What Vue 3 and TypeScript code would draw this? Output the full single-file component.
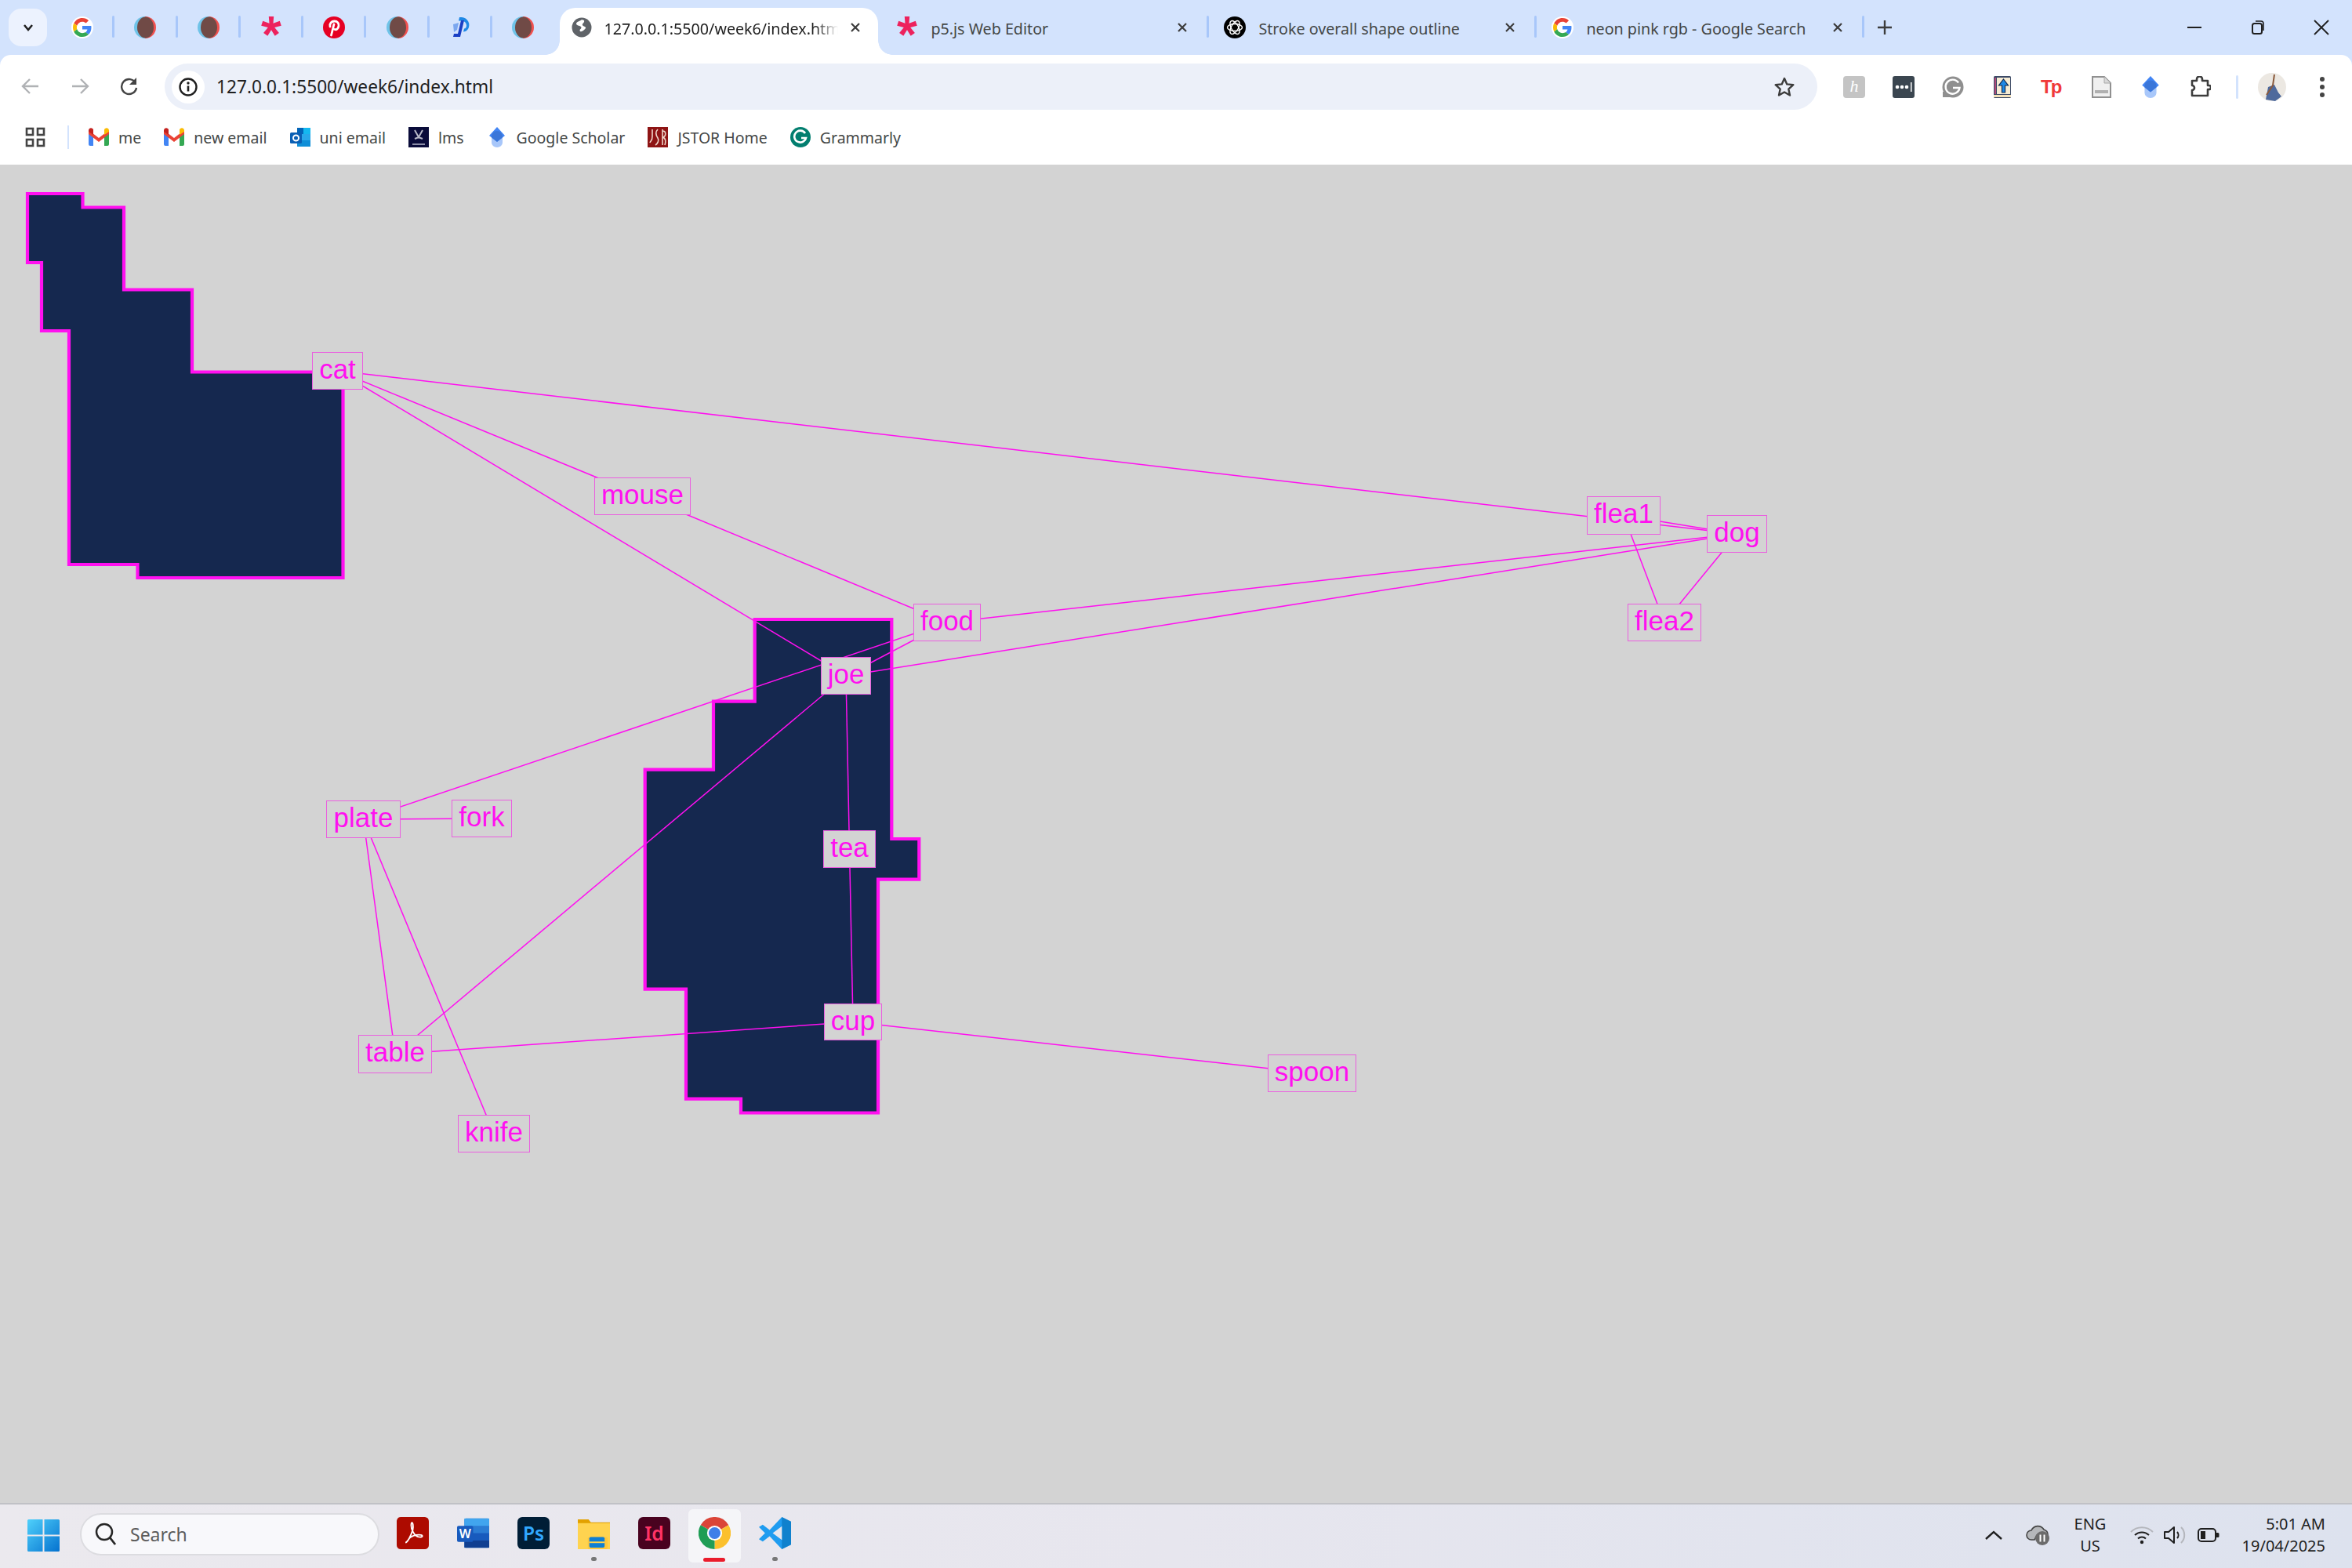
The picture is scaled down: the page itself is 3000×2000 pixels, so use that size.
<script setup lang="ts">
interface Node { t: string; x: number; y: number; r: number; b: number }
const TOP = 210
const nodes: Node[] = [
  { t: 'cat', x: 398, y: 449, r: 463, b: 497 },
  { t: 'mouse', x: 758, y: 609, r: 881, b: 657 },
  { t: 'food', x: 1165, y: 770, r: 1251, b: 818 },
  { t: 'joe', x: 1047, y: 838, r: 1111, b: 886 },
  { t: 'tea', x: 1050, y: 1059, r: 1117, b: 1107 },
  { t: 'cup', x: 1051, y: 1280, r: 1125, b: 1327 },
  { t: 'table', x: 457, y: 1320, r: 551, b: 1369 },
  { t: 'plate', x: 416, y: 1021, r: 511, b: 1069 },
  { t: 'fork', x: 576, y: 1020, r: 653, b: 1068 },
  { t: 'knife', x: 584, y: 1422, r: 676, b: 1470 },
  { t: 'spoon', x: 1617, y: 1345, r: 1730, b: 1393 },
  { t: 'flea1', x: 2024, y: 633, r: 2118, b: 682 },
  { t: 'dog', x: 2177, y: 657, r: 2254, b: 705 },
  { t: 'flea2', x: 2076, y: 770, r: 2170, b: 818 },
]
const pairs: [string, string][] = [
  ['cat', 'dog'], ['cat', 'mouse'], ['cat', 'joe'], ['mouse', 'food'], ['food', 'dog'],
  ['food', 'joe'], ['plate', 'food'], ['joe', 'dog'], ['joe', 'table'], ['joe', 'tea'],
  ['tea', 'cup'], ['table', 'cup'], ['cup', 'spoon'], ['plate', 'table'], ['plate', 'knife'],
  ['plate', 'fork'], ['flea1', 'dog'], ['flea1', 'flea2'], ['dog', 'flea2'],
]
const centre = (name: string) => {
  const n = nodes.find((v) => v.t === name) as Node
  return { x: (n.x + n.r) / 2, y: (n.y + n.b) / 2 - TOP }
}
const edges = pairs.map(([a, b]) => {
  const p = centre(a)
  const q = centre(b)
  return { id: a + b, x1: p.x, y1: p.y, x2: q.x, y2: q.y }
})
const boxStyle = (n: Node) => ({
  left: n.x + 'px',
  top: n.y - TOP + 'px',
  width: n.r - n.x + 'px',
  height: n.b - n.y + 'px',
})
const shapeA = '35,37 105.5,37 105.5,54.5 158,54.5 158,159.5 245,159.5 245,264.5 437.5,264.5 437.5,527 175.5,527 175.5,510 88,510 88,212 53,212 53,125 35,125'
const shapeB = '962.7,580 1137.3,580 1137.3,860 1172.3,860 1172.3,911.7 1120,911.7 1120,1209.5 945,1209.5 945,1191.7 875,1191.7 875,1051.7 822.7,1051.7 822.7,771.7 910,771.7 910,684.7 962.7,684.7'
const pinned = ['g', 'blur', 'blur', 'p5', 'pin', 'blur', 'dp', 'blur']
const tabs = [
  { icon: 'p5', title: 'p5.js Web Editor' },
  { icon: 'oai', title: 'Stroke overall shape outline' },
  { icon: 'g', title: 'neon pink rgb - Google Search' },
]
const bookmarks = [
  { icon: 'gm', label: 'me' },
  { icon: 'gm', label: 'new email' },
  { icon: 'ol', label: 'uni email' },
  { icon: 'lms', label: 'lms' },
  { icon: 'cap', label: 'Google Scholar' },
  { icon: 'jstor', label: 'JSTOR Home' },
  { icon: 'gr', label: 'Grammarly' },
]
</script>

<template>
  <div class="screen">
    <svg class="defs" width="0" height="0" aria-hidden="true">
      <defs>
        <symbol id="g" viewBox="-4 -4 56 56">
          <circle cx="24" cy="24" r="28" fill="#fff" />
          <path fill="#EA4335" d="M24 9.5c3.54 0 6.71 1.22 9.21 3.6l6.85-6.85C35.9 2.38 30.47 0 24 0 14.62 0 6.51 5.38 2.56 13.22l7.98 6.19C12.43 13.72 17.74 9.5 24 9.5z" />
          <path fill="#4285F4" d="M46.98 24.55c0-1.57-.15-3.09-.38-4.55H24v9.02h12.94c-.58 2.96-2.26 5.48-4.78 7.18l7.73 6c4.51-4.18 7.09-10.36 7.09-17.65z" />
          <path fill="#FBBC05" d="M10.53 28.59c-.48-1.45-.76-2.99-.76-4.59s.27-3.14.76-4.59l-7.98-6.19C.92 16.46 0 20.12 0 24c0 3.88.92 7.54 2.56 10.78l7.97-6.19z" />
          <path fill="#34A853" d="M24 48c6.48 0 11.93-2.13 15.89-5.81l-7.73-6c-2.15 1.45-4.92 2.3-8.16 2.3-6.26 0-11.57-4.22-13.47-9.91l-7.98 6.19C6.51 42.62 14.62 48 24 48z" />
        </symbol>
        <symbol id="blur" viewBox="0 0 28 28">
          <path d="M14 0a14 14 0 0 0 0 28z" fill="#6fc3e8" />
          <path d="M14 0a14 14 0 0 1 0 28z" fill="#f0504f" />
          <ellipse cx="14.500" cy="14" rx="10.500" ry="13.500" fill="#704a46" />
        </symbol>
        <symbol id="p5" viewBox="0 0 28 28">
          <path fill="#ed225d" d="M10.800 0h6.400l-.7 8.800 8.300-3.100 2 6.100-8.600 2.300 5.700 6.900-5.200 3.800L14 17.300l-4.700 7.500-5.200-3.800 5.700-6.900L1.200 11.800l2-6.100 8.300 3.100z" />
        </symbol>
        <symbol id="pin" viewBox="0 0 28 28">
          <circle cx="14" cy="14" r="14" fill="#e60023" />
          <path fill="none" stroke="#fff" stroke-width="2.800" stroke-linecap="round" d="M9 13c-1-4 2-7 5.500-7 4 0 6 3 5.500 6-.5 3.500-3 5.500-5 4.500M14 10l-3.500 14" />
        </symbol>
        <symbol id="dp" viewBox="0 0 28 28">
          <path fill="#1e88e5" d="M13 1h3a10 10 0 0 1 8 15c-1.500 2.500-4 3.500-6 3.500l1-4c2 0 3-2 3-4a6 6 0 0 0-6-6h-4z" />
          <path fill="#1a3fc4" d="M15 5h4l-5 21H5l1-4h5z" />
          <path fill="#7ba7ef" d="M5 10l7-2-2 9-4 3z" />
        </symbol>
        <symbol id="oai" viewBox="0 0 28 28">
          <circle cx="14" cy="14" r="14" fill="#000" />
          <g fill="none" stroke="#fff" stroke-width="1.400">
            <ellipse cx="14" cy="14" rx="9.500" ry="4.500" />
            <ellipse cx="14" cy="14" rx="9.500" ry="4.500" transform="rotate(60 14 14)" />
            <ellipse cx="14" cy="14" rx="9.500" ry="4.500" transform="rotate(120 14 14)" />
          </g>
        </symbol>
        <symbol id="gm" viewBox="0 0 26 26">
          <path fill="#4285f4" d="M0 6h6v18H2a2 2 0 0 1-2-2z" />
          <path fill="#34a853" d="M20 6h6v16a2 2 0 0 1-2 2h-4z" />
          <path fill="#ea4335" d="M0 4l13 10L26 4v5L13 19 0 9z" />
          <path fill="#c5221f" d="M0 4a3 3 0 0 1 5-2l1 1v7L0 6z" />
          <path fill="#fbbc04" d="M26 4a3 3 0 0 0-5-2l-1 1v7l6-4z" />
        </symbol>
        <symbol id="ol" viewBox="0 0 26 26">
          <rect x="9" y="1" width="17" height="24" rx="2" fill="#28a8ea" />
          <rect x="9" y="1" width="8" height="8" fill="#0364b8" />
          <rect x="17" y="1" width="9" height="8" fill="#14b8f0" />
          <rect x="9" y="17" width="17" height="8" fill="#0f8fd8" />
          <rect x="0" y="7" width="15" height="14" rx="1.500" fill="#0a5fb4" />
          <circle cx="7.500" cy="14" r="3.500" fill="none" stroke="#fff" stroke-width="2" />
        </symbol>
        <symbol id="lms" viewBox="0 0 26 26">
          <rect width="26" height="26" fill="#0a0c3a" />
          <path d="M8 4l5 9 5-9M8 15l5-2 5 2" fill="none" stroke="#b8bac8" stroke-width="2" />
          <rect x="5" y="21" width="16" height="2" fill="#8c8ea8" />
        </symbol>
        <symbol id="cap" viewBox="0 0 26 26">
          <path fill="#a8c7fa" d="M6 13v7a7 6 0 0 0 14 0v-7z" />
          <path fill="#4285f4" d="M13 0l10 11-10 8L3 11z" />
          <path fill="#356ac3" d="M13 19L6 13.400V12a7 7 0 0 1 14 0v1.400z" opacity="0.550" />
        </symbol>
        <symbol id="jstor" viewBox="0 0 26 26">
          <rect width="26" height="26" fill="#8e1414" />
          <path d="M6 3v9c0 6-2 5-3 8M13 3c-4 4-2 8 0 11s0 7-3 9M19 3v20M19 5c5 0 5 7 0 8 5 1 4 7 3 10" fill="none" stroke="#f0d8cc" stroke-width="1.600" />
        </symbol>
        <symbol id="gr" viewBox="0 0 26 26">
          <circle cx="13" cy="13" r="13" fill="#027e6f" />
          <path d="M19 8a7.500 7.500 0 1 0 1 6h-6" fill="none" stroke="#fff" stroke-width="2.600" />
        </symbol>
        <symbol id="x" viewBox="0 0 16 16">
          <path d="M3 3l10 10M13 3L3 13" stroke="#3c3c3c" stroke-width="2.200" fill="none" />
        </symbol>
      </defs>
    </svg>

    <div class="tabstrip">
      <button class="tabsearch">
        <svg width="16" height="16" viewBox="0 0 16 16"><path d="M3 5l5 6 5-6" fill="none" stroke="#1f1f1f" stroke-width="2.500" /></svg>
      </button>
      <div class="pinned">
        <div v-for="(p, i) in pinned" :key="i" class="pin-tab" :class="{ last: i === pinned.length - 1 }">
          <svg class="fav" viewBox="0 0 28 28"><use :href="'#' + p" /></svg>
        </div>
      </div>
      <div class="tab active">
        <svg class="fav" viewBox="0 0 28 28">
          <circle cx="14" cy="14" r="12.500" fill="#5f6368" />
          <path fill="#fff" d="M14 4c-2 2-6 2-7 5 0 3 4 2 6 4 2 3-3 3-1 6 3 1 5-2 7-4 1-2-3-2-4-4-1-2 3-3 2-6z" />
        </svg>
        <span class="title fade">127.0.0.1:5500/week6/index.html</span>
        <svg class="close" viewBox="0 0 16 16"><use href="#x" /></svg>
      </div>
      <div v-for="t in tabs" :key="t.title" class="tab">
        <svg class="fav" viewBox="0 0 28 28"><use :href="'#' + t.icon" /></svg>
        <span class="title">{{ t.title }}</span>
        <svg class="close" viewBox="0 0 16 16"><use href="#x" /></svg>
      </div>
      <svg class="plus" width="22" height="22" viewBox="0 0 22 22"><path d="M11 2v18M2 11h18" stroke="#3c3c3c" stroke-width="2.400" /></svg>
      <div class="winbtns">
        <svg width="20" height="20" viewBox="0 0 20 20"><path d="M1 10h18" stroke="#1f1f1f" stroke-width="2" /></svg>
        <svg width="20" height="20" viewBox="0 0 20 20"><rect x="3" y="5" width="12" height="13" rx="2.500" fill="none" stroke="#1f1f1f" stroke-width="2" /><path d="M7 2h7a3 3 0 0 1 3 3v9" fill="none" stroke="#1f1f1f" stroke-width="1.600" /></svg>
        <svg width="20" height="20" viewBox="0 0 20 20"><path d="M1 1l18 18M19 1L1 19" stroke="#1f1f1f" stroke-width="1.800" /></svg>
      </div>
    </div>

    <div class="toolbar">
      <div class="navs">
        <svg width="24" height="24" viewBox="0 0 24 24"><path d="M22 12H3M11 3l-9 9 9 9" fill="none" stroke="#b0b2b5" stroke-width="2.400" /></svg>
        <svg width="24" height="24" viewBox="0 0 24 24"><path d="M2 12h19M13 3l9 9-9 9" fill="none" stroke="#b0b2b5" stroke-width="2.400" /></svg>
        <svg width="24" height="24" viewBox="0 0 24 24"><path d="M20 8a9.500 9.500 0 1 0 1 6" fill="none" stroke="#444" stroke-width="2.400" /><path d="M21 1v9h-9z" fill="#444" /></svg>
      </div>
      <div class="omnibox">
        <div class="info">
          <svg width="26" height="26" viewBox="0 0 26 26"><circle cx="13" cy="13" r="10.500" fill="none" stroke="#1f1f1f" stroke-width="2.400" /><path d="M13 11.500v7" stroke="#1f1f1f" stroke-width="2.600" /><circle cx="13" cy="8" r="1.700" fill="#1f1f1f" /></svg>
        </div>
        <span class="url">127.0.0.1:5500/week6/index.html</span>
        <svg class="star" width="28" height="28" viewBox="0 0 28 28"><path d="M14 3l3.300 7.400 8 .8-6 5.400 1.700 7.900-7-4-7 4 1.700-7.900-6-5.400 8-.8z" fill="none" stroke="#3c3c3c" stroke-width="2.400" stroke-linejoin="round" /></svg>
      </div>
      <div class="exts">
        <div class="ext ext-h">h</div>
        <svg class="ext" viewBox="0 0 28 28"><rect width="28" height="28" rx="3" fill="#3b4650" /><circle cx="6" cy="14" r="2.300" fill="#fff" /><circle cx="12" cy="14" r="2.300" fill="#fff" /><circle cx="18" cy="14" r="2.300" fill="#fff" /><rect x="23" y="8" width="1.500" height="12" fill="#fff" /></svg>
        <svg class="ext" viewBox="0 0 28 28"><circle cx="14" cy="14" r="13.500" fill="#8f8f8f" /><path d="M1 27h13V20H1z" fill="#8f8f8f" /><path d="M21 8.500a9 9 0 1 0 1.500 6.500H14" fill="none" stroke="#fff" stroke-width="2.400" /></svg>
        <svg class="ext" viewBox="0 0 28 28"><rect x="3" y="0" width="22" height="28" rx="1.500" fill="#3c4a66" /><rect x="7" y="2" width="17" height="21" fill="#f6ecd4" /><rect x="3" y="24" width="22" height="3" fill="#f4e2bc" /><rect x="4" y="2" width="2" height="21" fill="#b04a7a" /><path d="M15.500 4l6 8h-4v9h-4v-9h-4z" fill="#1e88e5" stroke="#102a50" stroke-width="1.200" /></svg>
        <div class="ext ext-tp">Tp</div>
        <svg class="ext" viewBox="0 0 28 28"><path d="M3 1h15l8 8v18H3z" fill="#f0f0f0" stroke="#909090" stroke-width="2" /><path d="M18 1v8h8" fill="#d8d8d8" stroke="#a8a8a8" stroke-width="1" /><rect x="6" y="18" width="17" height="4" fill="#b0b0b0" /></svg>
        <svg class="ext" viewBox="0 0 26 26"><use href="#cap" /></svg>
        <svg class="ext" viewBox="0 0 28 28"><path d="M4 6h6V4a3 3 0 0 1 7 0v2h7v6h1.500a2.500 2.500 0 0 1 0 5H24v8H4v-7a3 3 0 0 0 0-6z" fill="none" stroke="#3c3c3c" stroke-width="2.600" stroke-linejoin="round" /></svg>
        <span class="ext-sep"></span>
        <svg class="avatar" viewBox="0 0 36 36">
          <circle cx="18" cy="18" r="18" fill="#ece8e2" />
          <path d="M10 34l3-16 8-3 5 10 4 5-8 6z" fill="#4f6a9c" />
          <path d="M21 2l-2 14-8 12" fill="none" stroke="#8a5a3c" stroke-width="2" />
        </svg>
        <svg class="dots" width="10" height="28" viewBox="0 0 10 28"><circle cx="5" cy="4" r="3" fill="#444" /><circle cx="5" cy="14" r="3" fill="#444" /><circle cx="5" cy="24" r="3" fill="#444" /></svg>
      </div>
    </div>

    <div class="bookmarks">
      <svg class="apps" width="26" height="26" viewBox="0 0 26 26">
        <g fill="none" stroke="#444" stroke-width="2.600"><rect x="2" y="2" width="8" height="8" /><rect x="16" y="2" width="8" height="8" /><rect x="2" y="16" width="8" height="8" /><rect x="16" y="16" width="8" height="8" /></g>
      </svg>
      <span class="bm-sep"></span>
      <div class="bm-list">
        <div v-for="b in bookmarks" :key="b.label" class="bm">
          <svg width="26" height="26" viewBox="0 0 26 26"><use :href="'#' + b.icon" /></svg>
          <span>{{ b.label }}</span>
        </div>
      </div>
    </div>

    <main class="canvas">
      <svg class="drawing" width="3000" height="1707">
        <polygon :points="shapeA" class="shape" />
        <polygon :points="shapeB" class="shape" />
        <line v-for="e in edges" :key="e.id" :x1="e.x1" :y1="e.y1" :x2="e.x2" :y2="e.y2" class="edge" />
      </svg>
      <div v-for="n in nodes" :key="n.t" class="node" :style="boxStyle(n)">{{ n.t }}</div>
    </main>

    <footer class="taskbar">
      <svg class="win" width="41" height="41" viewBox="0 0 41 41">
        <defs><linearGradient id="wg" x1="0" y1="0" x2="1" y2="1"><stop offset="0" stop-color="#4fd0fb" /><stop offset="1" stop-color="#0572cf" /></linearGradient></defs>
        <path fill="url(#wg)" d="M0 1.500A1.500 1.500 0 0 1 1.500 0H19.500V19.500H0zM21.500 0H39.500A1.500 1.500 0 0 1 41 1.500V19.500H21.500zM0 21.500H19.500V41H1.500A1.500 1.500 0 0 1 0 39.500zM21.500 21.500H41V39.500A1.500 1.500 0 0 1 39.500 41H21.500z" />
      </svg>
      <div class="search">
        <svg width="30" height="32" viewBox="0 0 30 32"><circle cx="13" cy="13" r="10" fill="none" stroke="#262626" stroke-width="2.500" /><path d="M20 20l7 9" stroke="#262626" stroke-width="2.800" /></svg>
        <span>Search</span>
      </div>
      <div class="apps-row">
        <div class="app-slot">
          <svg class="app-ic" viewBox="0 0 40 40"><rect width="40" height="40" rx="5" fill="#ad0b00" /><path d="M11 32c4-2 7-10 9-16 1-5 0-9-1-9s-2 5 1 11c2 4 5 7 9 7 4 0 4-3-1-3-5 0-10 2-13 5" fill="none" stroke="#fff" stroke-width="1.800" /></svg>
        </div>
        <div class="app-slot">
          <svg class="app-ic" viewBox="0 0 44 40"><rect x="10" y="0" width="34" height="40" rx="2" fill="#2b7cd3" /><rect x="10" y="0" width="34" height="10" fill="#41a5ee" /><rect x="10" y="20" width="34" height="10" fill="#185abd" /><rect x="10" y="30" width="34" height="10" fill="#103f91" /><rect x="0" y="10" width="22" height="22" rx="2" fill="#185abd" /><text x="11" y="27" class="svgtxt" font-size="17" text-anchor="middle" fill="#fff">W</text></svg>
        </div>
        <div class="app-slot">
          <svg class="app-ic" viewBox="0 0 40 40"><rect width="40" height="40" rx="6" fill="#001e36" /><text x="20" y="29" class="svgtxt" font-size="24" text-anchor="middle" fill="#31a8ff">Ps</text></svg>
        </div>
        <div class="app-slot dot-slot">
          <svg class="app-ic" viewBox="0 0 42 42"><path d="M0 3h14l3 4h25v34H0z" fill="#e3a100" /><rect y="8" width="42" height="34" fill="#ffd34f" /><rect x="13" y="26" width="26" height="16" rx="2" fill="#ffc83d" /><rect x="15" y="26" width="20" height="14" rx="2" fill="#0f7fd4" /><rect x="15" y="32" width="20" height="2" fill="#ffd34f" /></svg>
          <i class="dot"></i>
        </div>
        <div class="app-slot">
          <svg class="app-ic" viewBox="0 0 40 40"><rect width="40" height="40" rx="6" fill="#49021f" /><text x="20" y="29" class="svgtxt" font-size="24" text-anchor="middle" fill="#ff3366">Id</text></svg>
        </div>
        <div class="app-slot chrome">
          <svg class="app-ic" viewBox="0 0 24 24">
            <path d="M12 12L1.600 6A12 12 0 0 1 22.400 6z" fill="#db4437" />
            <path d="M12 12L22.400 6A12 12 0 0 1 12 24z" fill="#fbc02d" />
            <path d="M12 12L12 24A12 12 0 0 1 1.600 6z" fill="#1f9d55" />
            <circle cx="12" cy="12" r="5.600" fill="#fff" />
            <circle cx="12" cy="12" r="4.400" fill="#3f7fe8" />
          </svg>
          <i class="bar"></i>
        </div>
        <div class="app-slot dot-slot">
          <svg class="app-ic" viewBox="0 0 42 42"><path d="M30 0l12 6v30l-12 6-16-17-9 7-5-3 8-8-8-8 5-3 9 7z" fill="#1f9cf0" /><path d="M30 0v42l12-6V6z" fill="#0065a9" opacity="0.500" /><path d="M30 12L18 21l12 9z" fill="#e6e6ee" /></svg>
          <i class="dot"></i>
        </div>
      </div>
      <div class="tray">
        <svg width="24" height="14" viewBox="0 0 24 14"><path d="M2 12L12 3l10 9" fill="none" stroke="#1f1f1f" stroke-width="2.400" /></svg>
        <svg class="cloud" width="30" height="28" viewBox="0 0 30 28"><path d="M7 20a6 6 0 0 1 0-12 9 9 0 0 1 16-1 7 7 0 0 1 5 7H14l-3 6z" fill="#b5b7ba" stroke="#444" stroke-width="1.600" /><circle cx="21" cy="18" r="9" fill="#6b6b6b" /><path d="M18.500 13.500v9M23.500 13.500v9" stroke="#fff" stroke-width="2" /></svg>
        <div class="lang"><span>ENG</span><span>US</span></div>
        <svg class="wifi" width="30" height="24" viewBox="0 0 30 24"><path d="M1 8a20 20 0 0 1 28 0" fill="none" stroke="#b4b6bc" stroke-width="2" /><path d="M6 12a13 13 0 0 1 18 0M10 16.500a7 7 0 0 1 10 0" fill="none" stroke="#1f1f1f" stroke-width="2" /><circle cx="15" cy="21" r="2.200" fill="#1f1f1f" /></svg>
        <svg class="vol" width="30" height="26" viewBox="0 0 30 26"><path d="M2 9h5l7-6v20l-7-6H2z" fill="none" stroke="#1f1f1f" stroke-width="2" stroke-linejoin="round" /><path d="M18 9a6 6 0 0 1 0 8" fill="none" stroke="#1f1f1f" stroke-width="2" /><path d="M23 3a14 14 0 0 1 0 20" fill="none" stroke="#b4b6bc" stroke-width="2" /></svg>
        <svg class="batt" width="28" height="18" viewBox="0 0 28 18"><rect x="1" y="1" width="22" height="16" rx="4" fill="none" stroke="#1f1f1f" stroke-width="2" /><rect x="4" y="4" width="6" height="10" fill="#1f1f1f" /><path d="M24 6h2a1.500 1.500 0 0 1 1.500 1.500v3A1.500 1.500 0 0 1 26 12h-2z" fill="#1f1f1f" /></svg>
        <div class="clock"><span>5:01 AM</span><span>19/04/2025</span></div>
      </div>
    </footer>
  </div>
</template>

<style scoped>
.screen {
  width: 3000px;
  height: 2000px;
  display: flex;
  flex-direction: column;
  overflow: hidden;
  background: #d3e3fd;
  font-family: "Noto Sans", "Open Sans", sans-serif;
  position: relative;
}
.defs { position: absolute; }
.tabstrip {
  height: 70px;
  flex: none;
  display: flex;
  align-items: flex-start;
  padding-left: 11px;
}
.tabsearch {
  width: 49px;
  height: 48px;
  margin-top: 11px;
  border: 0;
  border-radius: 16px;
  background: #ecf2fe;
  display: flex;
  align-items: center;
  justify-content: center;
  padding: 0;
}
.pinned { display: flex; margin-left: 5px; margin-top: 10px; }
.pin-tab {
  width: 80.3px;
  height: 60px;
  padding-bottom: 10px;
  box-sizing: border-box;
  display: flex;
  align-items: center;
  justify-content: center;
  position: relative;
}
.pin-tab::after, .tab:not(.active)::after {
  content: "";
  position: absolute;
  right: -1px;
  top: 10px;
  width: 3px;
  height: 28px;
  border-radius: 2px;
  background: #a8c7fa;
}
.pin-tab.last::after { display: none; }
.fav { width: 28px; height: 28px; flex: none; }
.tab {
  position: relative;
  width: 418px;
  height: 60px;
  margin-top: 10px;
  padding: 0 25px 10px 20px;
  box-sizing: border-box;
  display: flex;
  align-items: center;
  gap: 16px;
  flex: none;
}
.tab.active {
  width: 406px;
  margin: 10px 3px 0 7px;
  padding: 0 21px 10px 14px;
  gap: 14px;
  background: #fff;
  border-radius: 20px 20px 0 0;
}
.tab.active::before, .tab.active::after {
  content: "";
  position: absolute;
  bottom: 0;
  width: 18px;
  height: 18px;
}
.tab.active::before { left: -18px; background: radial-gradient(circle at 0 0, #d3e3fd 17.500px, #fff 18px); }
.tab.active::after { right: -18px; background: radial-gradient(circle at 100% 0, #d3e3fd 17.500px, #fff 18px); }
.title {
  flex: 1;
  min-width: 0;
  white-space: nowrap;
  overflow: hidden;
  font-size: 19.700px;
  color: #444746;
  position: relative;
  top: 1px;
}
.active .title { color: #1f1f1f; }
.fade { -webkit-mask-image: linear-gradient(90deg, #000 90%, transparent); mask-image: linear-gradient(90deg, #000 90%, transparent); }
.close { width: 16px; height: 16px; flex: none; }
.plus { margin: 24px 0 0 16px; flex: none; }
.winbtns {
  margin-left: auto;
  width: 240px;
  padding: 25px 29px 0 0;
  box-sizing: border-box;
  display: flex;
  justify-content: flex-end;
  gap: 61px;
}
.toolbar {
  height: 80px;
  flex: none;
  position: relative;
  background: #fff;
  border-radius: 14px 14px 0 0;
  display: flex;
  align-items: flex-start;
}
.navs {
  display: flex;
  gap: 39px;
  padding: 28px 0 0 27px;
  width: 210px;
  box-sizing: border-box;
  flex: none;
}
.omnibox {
  width: 2108px;
  height: 59px;
  margin-top: 11px;
  border-radius: 30px;
  background: #ecf0f9;
  display: flex;
  align-items: center;
  padding: 0 28px 0 9px;
  box-sizing: border-box;
  flex: none;
}
.info {
  width: 42px;
  height: 42px;
  border-radius: 50%;
  background: #fff;
  display: flex;
  align-items: center;
  justify-content: center;
}
.url { margin-left: 15px; font-size: 22.700px; color: #1f1f1f; white-space: nowrap; }
.star { margin-left: auto; }
.exts {
  display: flex;
  align-items: center;
  height: 59px;
  margin-top: 11px;
  padding-left: 33px;
  gap: 35px;
  flex: 1;
  position: relative;
}
.ext { width: 28px; height: 28px; flex: none; }
.ext-h {
  background: #c4c4c4;
  border-radius: 4px;
  color: #fff;
  font: italic 22px "Liberation Serif", serif;
  text-align: center;
  line-height: 26px;
}
.ext-tp {
  color: #f03a3a;
  font: 700 24px "Liberation Sans", sans-serif;
  letter-spacing: -2px;
  line-height: 28px;
}
.ext-sep { width: 3px; height: 30px; background: #d3e3fd; margin: 0 -3px 0 -3px; flex: none; border-radius: 2px; }
.avatar { width: 36px; height: 36px; flex: none; margin-left: -7px; }
.dots { margin-left: 6px; flex: none; }
.bookmarks {
  height: 60px;
  flex: none;
  background: #fff;
  display: flex;
  align-items: center;
  padding-left: 32px;
  padding-bottom: 10px;
  box-sizing: border-box;
}
.bm-sep { width: 2px; height: 30px; background: #d3e3fd; margin: 0 25px 0 28px; flex: none; }
.bm-list { display: flex; align-items: center; gap: 29px; }
.bm { display: flex; align-items: center; gap: 12px; font-size: 19.500px; color: #444746; white-space: nowrap; }
.canvas {
  flex: 1;
  position: relative;
  background: #d3d3d3;
  min-height: 0;
}
.drawing { position: absolute; left: 0; top: 0; }
.shape { fill: #15284f; stroke: #ff10f0; stroke-width: 4.200; }
.edge { stroke: #ff10f0; stroke-width: 1.500; }
.node {
  position: absolute;
  box-sizing: border-box;
  background: #d3d3d3;
  border: 1.500px solid #ea5fdf;
  color: #ff10f0;
  font: 35px/41px "Liberation Sans", Arial, sans-serif;
  text-align: center;
  white-space: nowrap;
}
.taskbar {
  height: 83px;
  flex: none;
  background: linear-gradient(90deg, #ebe9ee, #e7e6ee 50%, #dde2ee);
  border-top: 2px solid #c0c1c6;
  box-sizing: border-box;
  display: flex;
  align-items: center;
  padding: 0 0 2px 35px;
  position: relative;
}
.win { flex: none; }
.search {
  width: 382px;
  height: 54px;
  margin-left: 26px;
  margin-top: -3px;
  border-radius: 27px;
  background: #f8f8fb;
  border: 2px solid #dcdce0;
  box-sizing: border-box;
  display: flex;
  align-items: center;
  padding-left: 16px;
  gap: 16px;
  font-size: 23px;
  color: #5c5c5c;
}
.apps-row { display: flex; margin-left: 6px; align-items: center; }
.app-slot {
  width: 67px;
  height: 68px;
  margin-right: 10px;
  position: relative;
  display: flex;
  align-items: center;
  justify-content: center;
  padding-bottom: 6px;
  box-sizing: border-box;
}
.app-slot:first-child { margin-left: 3px; }
.app-ic { width: 41px; height: 41px; }
.chrome { background: #f5f5f8; border-radius: 6px; }
.bar {
  position: absolute;
  left: 19px;
  bottom: 1px;
  width: 28px;
  height: 5px;
  border-radius: 3px;
  background: #ea1c2c;
}
.dot {
  position: absolute;
  left: 30px;
  bottom: 2px;
  width: 7px;
  height: 5px;
  border-radius: 3px;
  background: #777;
}
.tray {
  position: absolute;
  left: 2531px;
  top: 0;
  bottom: 4px;
  right: 34px;
  display: flex;
  align-items: center;
  color: #1f1f1f;
}
.cloud { margin-left: 29px; }
.lang {
  width: 60px;
  margin-left: 22px;
  display: flex;
  flex-direction: column;
  align-items: center;
  font-size: 20px;
  line-height: 28px;
}
.wifi { margin-left: 21px; }
.vol { margin-left: 12px; }
.batt { margin-left: 14px; }
.clock {
  margin-left: auto;
  display: flex;
  flex-direction: column;
  align-items: flex-end;
  font-size: 20px;
  line-height: 28px;
}
.svgtxt { font-family: "Noto Sans", sans-serif; font-weight: 600; }
</style>

<style>
html, body { margin: 0; padding: 0; background: #d3d3d3; }
</style>
